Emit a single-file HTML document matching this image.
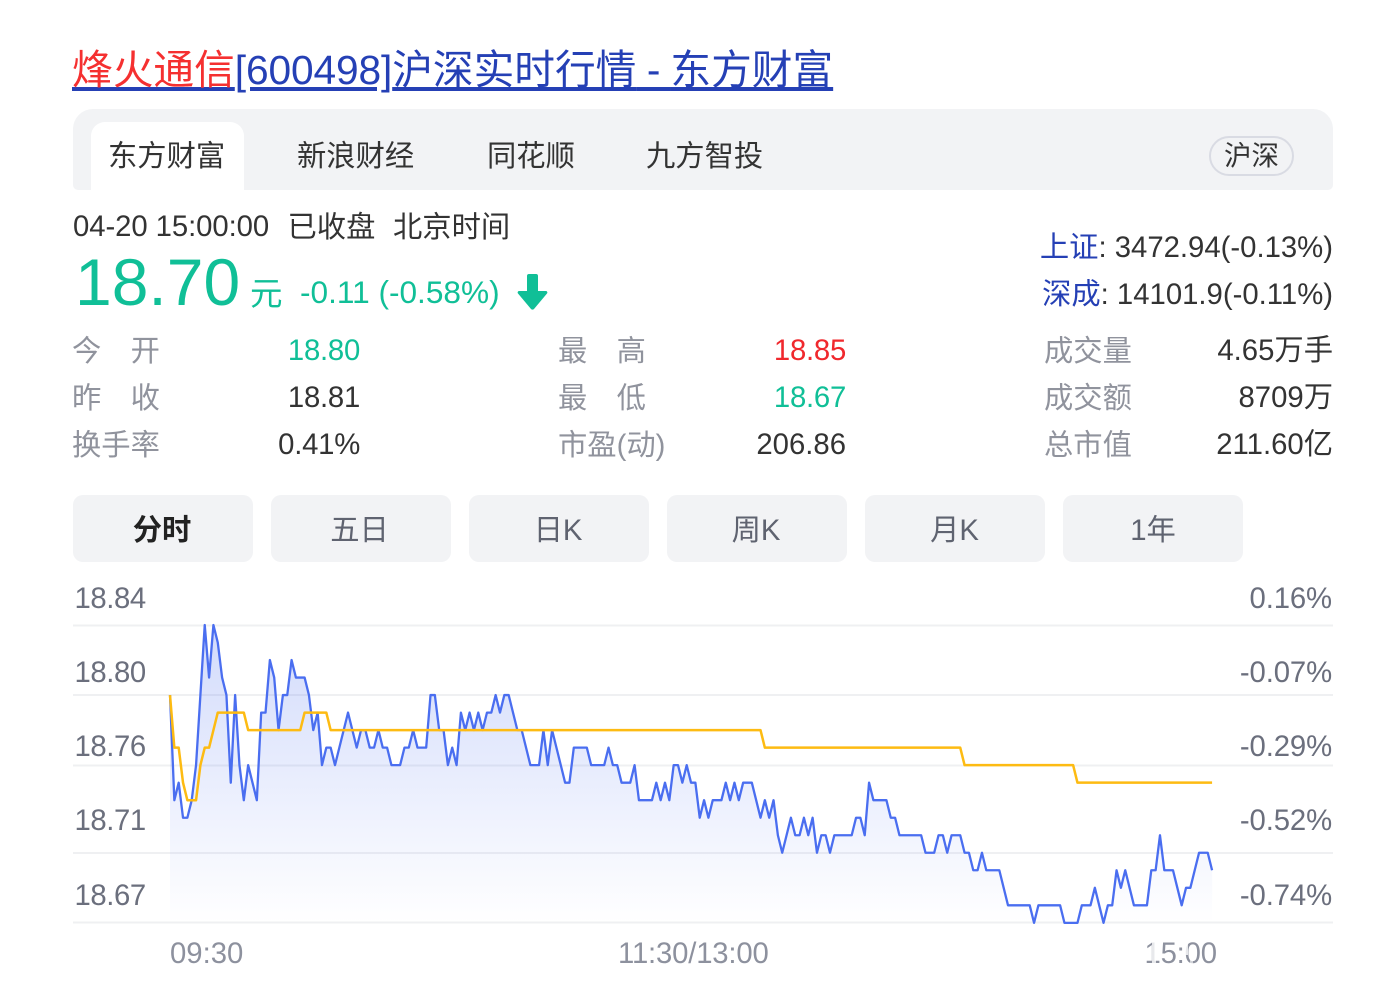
<!DOCTYPE html>
<html lang="zh"><head><meta charset="utf-8"><title>烽火通信</title>
<style>
html,body{margin:0;padding:0;background:#fff}
body{width:1394px;height:989px;position:relative;overflow:hidden;font-family:"Liberation Sans","Noto Sans CJK SC",sans-serif;font-size:29.3px;color:#333}
.t{position:absolute;white-space:nowrap;line-height:40px;height:40px}
.l{color:#90939d}
.r{text-align:right}
.g{color:#10bf97}
.y{color:#6b6f7d}
.a{color:#8d919e}
.n{letter-spacing:-.25px}
.b{position:absolute;top:495px;width:180px;height:67px;line-height:72px;border-radius:10px;background:#f2f3f5;text-align:center;color:#5f6370}
.bar{position:absolute;left:73px;top:109px;width:1260px;height:81px;background:#f2f3f5;border-radius:20px 20px 5px 5px}
.tab{position:absolute;left:91px;top:122px;width:153px;height:68px;background:#fff;border-radius:14px 14px 0 0}
.pill{position:absolute;left:1209px;top:136px;width:81px;height:36px;border:2px solid #d9dbe3;border-radius:20px;text-align:center;line-height:36px;font-size:27.5px}
a{color:#2540b5;text-decoration:underline}
h1{position:absolute;margin:0;left:72px;top:45px;font-size:40.7px;font-weight:400;line-height:50px;white-space:nowrap}
h1 em{font-style:normal;color:#f53030}
h1 i{font-style:normal;letter-spacing:-.12px}
h1 s{text-decoration:inherit;letter-spacing:-.7px}
svg{position:absolute;left:0;top:0}
</style></head><body>
<h1><a href="#"><em>烽火通信</em><i>[600498]</i>沪深实时行情<s> - </s>东方财富</a></h1>
<div class="bar"></div><div class="tab"></div>
<div class="t" style="left:108px;top:137px">东方财富</div>
<div class="t" style="left:297px;top:137px">新浪财经</div>
<div class="t" style="left:487px;top:137px">同花顺</div>
<div class="t" style="left:646px;top:137px">九方智投</div>
<div class="pill">沪深</div>

<div class="t" style="left:73px;top:207px;letter-spacing:-.07px">04-20 15:00:00</div>
<div class="t" style="left:287.500px;top:208px">已收盘</div>
<div class="t" style="left:393px;top:208px">北京时间</div>
<div class="t g" style="left:75px;top:247px;font-size:66px;line-height:70px;height:70px">18.70</div>
<div class="t g" style="left:250px;top:274px;font-size:32.5px">元</div>
<div class="t g" style="left:300px;top:272px;font-size:31.6px">-0.11 (-0.58%)</div>
<svg width="1394" height="989" style="pointer-events:none"><path d="M528 274h8a2 2 0 0 1 2 2v15h8a1.500 1.500 0 0 1 1 2.500l-13 15.500a2 2 0 0 1-3 0l-13-15.500a1.500 1.500 0 0 1 1-2.500h8v-15a2 2 0 0 1 2-2z" fill="#10bf97"/></svg>

<div class="t r" style="right:61px;top:228px"><a href="#" style="text-decoration:none">上证</a>: 3472.94(-0.13%)</div>
<div class="t r" style="right:61px;top:275px"><a href="#" style="text-decoration:none">深成</a>: 14101.9(-0.11%)</div>

<div class="t l" style="left:72px;top:332px">今　开</div>
<div class="t l" style="left:72px;top:379px">昨　收</div>
<div class="t l" style="left:72px;top:426px">换手率</div>
<div class="t r g n" style="right:1034px;top:331px">18.80</div>
<div class="t r n" style="right:1034px;top:378px">18.81</div>
<div class="t r n" style="right:1034px;top:425px">0.41%</div>

<div class="t l" style="left:558px;top:332px">最　高</div>
<div class="t l" style="left:558px;top:379px">最　低</div>
<div class="t l" style="left:558px;top:426px">市盈(动)</div>
<div class="t r n" style="right:548px;top:331px;color:#f0282d">18.85</div>
<div class="t r g n" style="right:548px;top:378px">18.67</div>
<div class="t r" style="right:548px;top:425px">206.86</div>

<div class="t l" style="left:1044px;top:332px">成交量</div>
<div class="t l" style="left:1044px;top:379px">成交额</div>
<div class="t l" style="left:1044px;top:426px">总市值</div>
<div class="t r" style="right:61px;top:331px">4.65万手</div>
<div class="t r" style="right:61px;top:378px">8709万</div>
<div class="t r" style="right:61px;top:425px">211.60亿</div>

<div class="b" style="left:73px;color:#222;font-weight:700;text-indent:-2px">分时</div>
<div class="b" style="left:271px;text-indent:-3px">五日</div>
<div class="b" style="left:469px;text-indent:-2px">日K</div>
<div class="b" style="left:667px;text-indent:-2px">周K</div>
<div class="b" style="left:865px;text-indent:-1px">月K</div>
<div class="b" style="left:1063px">1年</div>

<svg width="1394" height="989">
<defs><linearGradient id="f" x1="0" y1="0" x2="0" y2="1"><stop offset="0" stop-color="#4a6ef0" stop-opacity=".25"/><stop offset="1" stop-color="#4a6ef0" stop-opacity="0"/></linearGradient></defs>
<g fill="#eff0f2"><rect x="73" y="624.500" width="1260" height="2"/><rect x="73" y="694" width="1260" height="2"/><rect x="73" y="764.500" width="1260" height="2"/><rect x="73" y="852" width="1260" height="2"/><rect x="73" y="921.500" width="1260" height="2"/></g>
<g transform="translate(170,625) scale(4.342,17.52)" stroke-linejoin="round">
<polygon fill="url(#f)" points="0,4 1,10 2,9 3,11 4,11 5,10 6,8 7,4 8,0 9,3 10,0 11,1 12,3 13,4 14,9 15,4 16,8 17,10 18,8 19,9 20,10 21,5 22,5 23,2 24,3 25,6 26,4 27,4 28,2 29,3 31,3 32,4 33,6 34,5 35,8 36,7 37,7 38,8 39,7 40,6 41,5 42,6 43,7 44,6 45,6 46,7 47,7 48,6 49,7 50,7 51,8 53,8 54,7 55,7 56,6 57,7 59,7 60,4 61,4 62,6 63,6 64,8 65,7 66,8 67,5 68,6 69,5 70,6 71,5 72,6 73,5 74,5 75,4 76,5 77,4 78,4 79,5 80,6 81,6 82,7 83,8 85,8 86,6 87,8 88,6 89,7 90,8 91,9 92,9 93,7 96,7 97,8 100,8 101,7 102,8 103,8 104,9 106,9 107,8 108,10 111,10 112,9 113,10 114,9 115,10 116,8 117,8 118,9 119,8 120,9 121,9 122,11 123,10 124,11 125,10 127,10 128,9 129,10 130,9 131,10 132,9 134,9 135,10 136,11 137,10 138,11 139,10 140,12 141,13 142,12 143,11 144,12 145,12 146,11 147,12 148,11 149,13 150,12 151,12 152,13 153,12 157,12 158,11 159,11 160,12 161,9 162,10 165,10 166,11 167,11 168,12 173,12 174,13 176,13 177,12 178,12 179,13 180,12 182,12 183,13 184,13 185,14 186,14 187,13 188,14 191,14 192,15 193,16 198,16 199,17 200,16 205,16 206,17 209,17 210,16 212,16 213,15 214,16 215,17 216,16 217,16 218,14 219,15 220,14 221,15 222,16 225,16 226,14 227,14 228,12 229,14 231,14 232,15 233,16 234,15 235,15 236,14 237,13 239,13 240,14 240,17 0,17"/>
<polyline fill="none" stroke="#4a6ef0" stroke-width="2.300" vector-effect="non-scaling-stroke" points="0,4 1,10 2,9 3,11 4,11 5,10 6,8 7,4 8,0 9,3 10,0 11,1 12,3 13,4 14,9 15,4 16,8 17,10 18,8 19,9 20,10 21,5 22,5 23,2 24,3 25,6 26,4 27,4 28,2 29,3 31,3 32,4 33,6 34,5 35,8 36,7 37,7 38,8 39,7 40,6 41,5 42,6 43,7 44,6 45,6 46,7 47,7 48,6 49,7 50,7 51,8 53,8 54,7 55,7 56,6 57,7 59,7 60,4 61,4 62,6 63,6 64,8 65,7 66,8 67,5 68,6 69,5 70,6 71,5 72,6 73,5 74,5 75,4 76,5 77,4 78,4 79,5 80,6 81,6 82,7 83,8 85,8 86,6 87,8 88,6 89,7 90,8 91,9 92,9 93,7 96,7 97,8 100,8 101,7 102,8 103,8 104,9 106,9 107,8 108,10 111,10 112,9 113,10 114,9 115,10 116,8 117,8 118,9 119,8 120,9 121,9 122,11 123,10 124,11 125,10 127,10 128,9 129,10 130,9 131,10 132,9 134,9 135,10 136,11 137,10 138,11 139,10 140,12 141,13 142,12 143,11 144,12 145,12 146,11 147,12 148,11 149,13 150,12 151,12 152,13 153,12 157,12 158,11 159,11 160,12 161,9 162,10 165,10 166,11 167,11 168,12 173,12 174,13 176,13 177,12 178,12 179,13 180,12 182,12 183,13 184,13 185,14 186,14 187,13 188,14 191,14 192,15 193,16 198,16 199,17 200,16 205,16 206,17 209,17 210,16 212,16 213,15 214,16 215,17 216,16 217,16 218,14 219,15 220,14 221,15 222,16 225,16 226,14 227,14 228,12 229,14 231,14 232,15 233,16 234,15 235,15 236,14 237,13 239,13 240,14"/>
<polyline fill="none" stroke="#fdbb12" stroke-width="2.500" vector-effect="non-scaling-stroke" points="0,4 1,7 2,7 3,9 4,10 6,10 7,8 8,7 9,7 10,6 11,5 17,5 18,6 30,6 31,5 36,5 37,6 136,6 137,7 182,7 183,8 208,8 209,9 240,9"/>
</g>
</svg>

<div class="t y n" style="left:74.500px;top:579px;letter-spacing:-.4px">18.84</div>
<div class="t y n" style="left:74.500px;top:653px;letter-spacing:-.4px">18.80</div>
<div class="t y n" style="left:74.500px;top:727px;letter-spacing:-.4px">18.76</div>
<div class="t y n" style="left:74.500px;top:801px;letter-spacing:-.4px">18.71</div>
<div class="t y n" style="left:74.500px;top:876px;letter-spacing:-.4px">18.67</div>
<div class="t y r" style="right:62px;top:579px;letter-spacing:-.12px">0.16%</div>
<div class="t y r" style="right:62px;top:653px;letter-spacing:-.12px">-0.07%</div>
<div class="t y r" style="right:62px;top:727px;letter-spacing:-.12px">-0.29%</div>
<div class="t y r" style="right:62px;top:801px;letter-spacing:-.12px">-0.52%</div>
<div class="t y r" style="right:62px;top:876px;letter-spacing:-.12px">-0.74%</div>
<div class="t a" style="left:170px;top:934px">09:30</div>
<div class="t a" style="left:618px;top:934px;letter-spacing:-.18px">11:30/13:00</div>
<div class="t a" style="left:1144.500px;top:934px;letter-spacing:-.2px">15:00</div>
<svg width="1394" height="989"><g fill="#fff"><rect x="1152" y="941" width="4" height="24" opacity=".8"/><rect x="1183" y="941" width="5" height="14" opacity=".8"/><rect x="1190" y="955" width="3" height="10" opacity=".6"/></g></svg>
</body></html>
